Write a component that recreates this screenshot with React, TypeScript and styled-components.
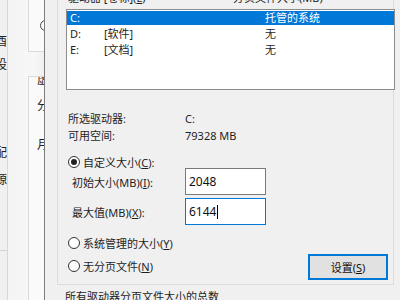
import React from "react";
import styled, { createGlobalStyle } from "styled-components";

const Global = createGlobalStyle`
  html, body { margin: 0; padding: 0; background: #f0f0f0; }
  body {
    width: 400px; height: 300px; overflow: hidden;
    font-family: "Noto Sans", "Noto Sans CJK SC", sans-serif;
    font-size: 11px; color: #1e1e1e;
  }
  #root { width: 400px; height: 300px; overflow: hidden; }
`;

const Screen = styled.div`
  display: flex;
  width: 400px;
  height: 300px;
  overflow: hidden;
`;

/* ---------- background dialog (left, partly covered) ---------- */
const BackPane = styled.div`
  flex: none;
  width: 44px;
  height: 300px;
  display: flex;
  overflow: hidden;
  background: #f0f0f0;
`;

const EdgeStrip = styled.div`
  flex: none;
  width: 7px;
  display: flex;
  flex-direction: column;
  overflow: hidden;
  border-right: 1px solid #d8d8d8;
`;

const EdgeChar = styled.div<{ $top: number }>`
  margin-top: ${(p) => p.$top}px;
  margin-left: -5px;
  font-size: 12px;
  line-height: 14px;
  height: 14px;
  white-space: nowrap;
  color: #222;
`;

const EdgeRule = styled.div<{ $top: number }>`
  margin-top: ${(p) => p.$top}px;
  height: 1px;
  background: #d2d2d2;
`;

const BackInner = styled.div`
  flex: 1;
  display: flex;
  flex-direction: column;
  padding-left: 20px;
  background: linear-gradient(to right, #f4f4f4 0%, #f7f7f7 60%, #ececec 100%);
`;

const BackBoxTop = styled.div`
  height: 52px;
  border-left: 1px solid #dadada;
  border-bottom: 1px solid #dadada;
  box-sizing: border-box;
  background: #fafafa;
  display: flex;
  flex-direction: column;
  overflow: hidden;
`;

const BackRadio = styled.div`
  margin-top: 20px;
  margin-left: 11px;
  width: 11px;
  height: 11px;
  flex: none;
  border: 1px solid #444;
  border-radius: 50%;
  box-sizing: border-box;
`;

const BackBoxBottom = styled.div`
  margin-top: 24px;
  flex: 1;
  border-left: 1px solid #dadada;
  border-top: 1px solid #dadada;
  background: #fafafa;
  display: flex;
  flex-direction: column;
  overflow: hidden;
`;

const BackChar = styled.div<{ $top: number }>`
  margin-top: ${(p) => p.$top}px;
  margin-left: 8px;
  font-size: 12px;
  line-height: 14px;
  height: 14px;
  white-space: nowrap;
  color: #222;
`;

const WindowEdge = styled.div`
  flex: none;
  width: 1px;
  height: 300px;
  background: #7c7c7c;
`;

/* ---------- front dialog ---------- */
const Dialog = styled.div`
  flex: 1;
  display: flex;
  flex-direction: column;
  padding-left: 12px;
  background: #f0f0f0;
  overflow: hidden;
`;

const Group = styled.div`
  width: 337px;
  box-sizing: border-box;
  margin-top: -18px;
  padding: 7px 5px 4px 8px;
  border: 1px solid #dcdcdc;
  display: flex;
  flex-direction: column;
`;

const Header = styled.div`
  display: flex;
  height: 16px;
  line-height: 16px;
  padding-left: 2px;
  white-space: nowrap;
`;

const HeaderCell = styled.div<{ $w?: number }>`
  flex: ${(p) => (p.$w ? `none` : `1`)};
  width: ${(p) => (p.$w ? `${p.$w}px` : `auto`)};
`;

const ListBox = styled.div`
  margin-top: 3px;
  margin-right: -7px;
  height: 81px;
  box-sizing: border-box;
  border: 1px solid #8c8c8c;
  background: #ffffff;
  padding-top: 1px;
  display: flex;
  flex-direction: column;
  gap: 2px;
`;

const Row = styled.div<{ $sel?: boolean }>`
  display: flex;
  height: 14px;
  line-height: 14px;
  padding-left: 3px;
  white-space: nowrap;
  background: ${(p) => (p.$sel ? "#0078d7" : "transparent")};
  color: ${(p) => (p.$sel ? "#ffffff" : "#1e1e1e")};
`;

const Cell = styled.div<{ $w?: number }>`
  flex: ${(p) => (p.$w ? "none" : "1")};
  width: ${(p) => (p.$w ? `${p.$w}px` : "auto")};
`;

const InfoGrid = styled.div`
  margin-top: 20px;
  padding-left: 2px;
  display: grid;
  grid-template-columns: 117px auto;
  line-height: 17px;
  white-space: nowrap;
`;

const RadioRow = styled.div`
  display: flex;
  align-items: center;
  gap: 3px;
  height: 17px;
  padding-left: 2px;
  white-space: nowrap;
`;

const RadioCircle = styled.span<{ $on?: boolean }>`
  flex: none;
  width: 12px;
  height: 12px;
  box-sizing: border-box;
  border: 1px solid #333;
  border-radius: 50%;
  background: #fff;
  display: flex;
  align-items: center;
  justify-content: center;
  &::after {
    content: "";
    width: 6px;
    height: 6px;
    border-radius: 50%;
    background: ${(p) => (p.$on ? "#222" : "transparent")};
  }
`;

const FirstRadio = styled(RadioRow)`
  margin-top: 9px;
`;

const FieldGrid = styled.div`
  margin-top: -2px;
  padding-left: 6px;
  display: grid;
  grid-template-columns: 113px 81px;
  row-gap: 3px;
  align-items: center;
  white-space: nowrap;
`;

const Input = styled.div<{ $focus?: boolean }>`
  height: 27px;
  box-sizing: border-box;
  border: 1px solid ${(p) => (p.$focus ? "#0078d7" : "#7a7a7a")};
  background: #ffffff;
  padding-left: 3px;
  display: flex;
  align-items: center;
  font-size: 12px;
  color: #111;
`;

const Caret = styled.span`
  width: 1px;
  height: 14px;
  background: #000;
  margin-left: 1px;
`;

const BottomRow = styled.div`
  margin-top: 9px;
  display: flex;
  justify-content: space-between;
  align-items: flex-start;
`;

const RadioColumn = styled.div`
  display: flex;
  flex-direction: column;
  gap: 6px;
`;

const Button = styled.div`
  margin-top: 20px;
  width: 80px;
  height: 26px;
  box-sizing: border-box;
  border: 2px solid #0078d7;
  background: #e1e1e1;
  display: flex;
  align-items: center;
  justify-content: center;
  white-space: nowrap;
  color: #111;
`;

const Footer = styled.div`
  margin-top: 4px;
  padding-left: 8px;
  line-height: 16px;
  white-space: nowrap;
`;

const U = styled.span`
  text-decoration: underline;
  text-underline-offset: 1px;
`;

export default function App() {
  return (
    <>
      <Global />
      <Screen>
        <BackPane>
          <EdgeStrip>
            <EdgeChar $top={35}>酉</EdgeChar>
            <EdgeChar $top={9}>设</EdgeChar>
            <EdgeChar $top={74}>配</EdgeChar>
            <EdgeChar $top={13}>源</EdgeChar>
            <EdgeRule $top={63} />
          </EdgeStrip>
          <BackInner>
            <BackBoxTop>
              <BackRadio />
            </BackBoxTop>
            <BackBoxBottom>
              <BackChar $top={-4}>虚</BackChar>
              <BackChar $top={12}>分</BackChar>
              <BackChar $top={25}>月</BackChar>
            </BackBoxBottom>
          </BackInner>
        </BackPane>
        <WindowEdge />
        <Dialog>
          <Group>
            <Header>
              <HeaderCell $w={165}>
                驱动器 [卷标](<U>L</U>)
              </HeaderCell>
              <HeaderCell>分页文件大小(MB)</HeaderCell>
            </Header>
            <ListBox>
              <Row $sel>
                <Cell $w={34}>C:</Cell>
                <Cell $w={161}></Cell>
                <Cell>托管的系统</Cell>
              </Row>
              <Row>
                <Cell $w={34}>D:</Cell>
                <Cell $w={161}>[软件]</Cell>
                <Cell>无</Cell>
              </Row>
              <Row>
                <Cell $w={34}>E:</Cell>
                <Cell $w={161}>[文档]</Cell>
                <Cell>无</Cell>
              </Row>
            </ListBox>
            <InfoGrid>
              <div>所选驱动器:</div>
              <div>C:</div>
              <div>可用空间:</div>
              <div>79328 MB</div>
            </InfoGrid>
            <FirstRadio>
              <RadioCircle $on />
              <span>
                自定义大小(<U>C</U>):
              </span>
            </FirstRadio>
            <FieldGrid>
              <div>
                初始大小(MB)(<U>I</U>):
              </div>
              <Input>2048</Input>
              <div>
                最大值(MB)(<U>X</U>):
              </div>
              <Input $focus>
                6144
                <Caret />
              </Input>
            </FieldGrid>
            <BottomRow>
              <RadioColumn>
                <RadioRow>
                  <RadioCircle />
                  <span>
                    系统管理的大小(<U>Y</U>)
                  </span>
                </RadioRow>
                <RadioRow>
                  <RadioCircle />
                  <span>
                    无分页文件(<U>N</U>)
                  </span>
                </RadioRow>
              </RadioColumn>
              <Button>
                设置(<U>S</U>)
              </Button>
            </BottomRow>
          </Group>
          <Footer>所有驱动器分页文件大小的总数</Footer>
        </Dialog>
      </Screen>
    </>
  );
}
